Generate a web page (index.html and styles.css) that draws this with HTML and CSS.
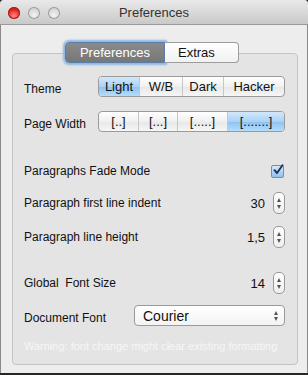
FILE: index.html
```html
<!DOCTYPE html>
<html lang="en">
<head>
    <meta charset="UTF-8">
    <meta name="viewport" content="width=device-width, initial-scale=1.0">
    <title>Preferences</title>
    <link rel="stylesheet" href="styles.css">
</head>
<body>
    <div class="window">
        <div class="titlebar">
            <div class="lights">
                <span class="light close"></span>
                <span class="light"></span>
                <span class="light"></span>
            </div>
            <div class="title">Preferences</div>
        </div>
        <div class="content">
            <div class="tabs">
                <span class="tab active">Preferences</span>
                <span class="tab">Extras</span>
            </div>
            <div class="group">
                <div class="row row-seg">
                    <span class="label">Theme</span>
                    <div class="segmented seg-theme">
                        <span class="seg selected">Light</span>
                        <span class="seg">W/B</span>
                        <span class="seg">Dark</span>
                        <span class="seg">Hacker</span>
                    </div>
                </div>
                <div class="row row-seg">
                    <span class="label">Page Width</span>
                    <div class="segmented seg-width">
                        <span class="seg">[..]</span>
                        <span class="seg">[...]</span>
                        <span class="seg">[.....]</span>
                        <span class="seg selected">[.......]</span>
                    </div>
                </div>

                <div class="row row-check">
                    <span class="label">Paragraphs Fade Mode</span>
                    <span class="checkbox">
                        <svg width="12" height="12" viewBox="0 0 12 12">
                            <path d="M2.5 6.2 L5 9 L10.5 1.2" fill="none" stroke="#1f2f5a" stroke-width="1.9" stroke-linecap="round" stroke-linejoin="round"/>
                        </svg>
                    </span>
                </div>
                <div class="row row-num">
                    <span class="label">Paragraph first line indent</span>
                    <span class="value">30</span>
                    <span class="stepper"><i class="up"></i><i class="down"></i></span>
                </div>
                <div class="row row-num">
                    <span class="label">Paragraph line height</span>
                    <span class="value">1,5</span>
                    <span class="stepper"><i class="up"></i><i class="down"></i></span>
                </div>

                <div class="row row-num row-font">
                    <span class="label">Global&nbsp; Font Size</span>
                    <span class="value">14</span>
                    <span class="stepper"><i class="up"></i><i class="down"></i></span>
                </div>
                <div class="row row-popup">
                    <span class="label">Document Font</span>
                    <div class="popup">
                        <span>Courier</span>
                        <span class="arrows"><i class="up"></i><i class="down"></i></span>
                    </div>
                </div>
                <div class="warning">Warning: font change might clear existing formatting</div>
            </div>
        </div>
    </div>
</body>
</html>
```

FILE: styles.css
```css
body {
    margin: 0;
    background-color: #2a2624;
    font-family: "Liberation Sans", Arial, sans-serif;
    font-size: 12px;
    color: #111;
}
.window {
    width: 308px;
    height: 373px;
    background-color: #ededed;
    border-radius: 4px 4px 0 0;
    box-shadow: inset 1px 0 0 #8a8a8a, inset -1px 0 0 #8a8a8a;
    display: flex;
    flex-direction: column;
    overflow: hidden;
}
.titlebar {
    height: 22px;
    padding-top: 2px;
    background: linear-gradient(#e9e9e9, #c9c9c9);
    border-bottom: 1px solid #9a9a9a;
    border-radius: 4px 4px 0 0;
    display: flex;
    align-items: center;
    position: relative;
    flex-shrink: 0;
}
.lights {
    display: flex;
    gap: 8px;
    padding-left: 8px;
}
.light {
    width: 12px;
    height: 12px;
    border-radius: 50%;
    background: radial-gradient(circle at 50% 70%, #f4f4f4, #c4c4c4);
    box-shadow: inset 0 0 0 1px #9c9c9c;
}
.light.close {
    background: radial-gradient(circle at 50% 75%, #ff8c86, #e0251c 60%, #b2150f);
    box-shadow: inset 0 0 0 1px #a4201a;
}
.title {
    position: absolute;
    left: 0;
    right: 0;
    top: 5px;
    text-align: center;
    font-size: 13px;
    color: #333;
}
.content {
    flex: 1;
    padding: 17px 10px 8px 12px;
    display: flex;
    flex-direction: column;
}
.tabs {
    display: flex;
    justify-content: center;
    margin-right: 6px;
    margin-bottom: -10px;
    position: relative;
    z-index: 1;
}
.tab {
    box-sizing: border-box;
    width: 74px;
    height: 21px;
    line-height: 19px;
    font-size: 13px;
    text-align: center;
    background: linear-gradient(#ffffff, #f1f1f1);
    border: 1px solid #9d9d9d;
}
.tab:last-child {
    border-radius: 0 4px 4px 0;
    border-left: none;
    text-align: left;
    padding-left: 13px;
}
.tab.active {
    width: 100px;
    border-radius: 4px 0 0 4px;
    background: linear-gradient(#8a8a8a, #777);
    color: #fff;
    border-color: #5c7ea6;
    box-shadow: 0 0 2px 2px #8bb7e6;
}
.group {
    flex: 1;
    background-color: #e4e4e4;
    border: 1px solid #c4c4c4;
    border-radius: 4px;
    padding: 22px 12px 0 11px;
    display: flex;
    flex-direction: column;
}
.row {
    display: flex;
    align-items: center;
}
.label {
    flex: 1;
}
.row-seg {
    height: 21px;
    margin-bottom: 14px;
}
.row-seg .label {
    flex: 0 0 74px;
    padding-top: 4px;
}
.segmented {
    flex: 1;
    display: flex;
    height: 19px;
    border: 1px solid #9b9b9b;
    border-radius: 4px;
    background: linear-gradient(#ffffff, #f0f0f0 50%, #e7e7e7 51%, #f6f6f6);
    overflow: hidden;
    font-size: 13px;
}
.seg {
    display: flex;
    align-items: center;
    justify-content: center;
    border-left: 1px solid #c6c6c6;
}
.seg:first-child {
    border-left: none;
}
.seg.selected {
    background: linear-gradient(#d2e8fb, #a9d2f6 50%, #8cc2f2 51%, #b5dcfa);
}
.seg-theme .seg:nth-child(1) { width: 40px; }
.seg-theme .seg:nth-child(2) { width: 42px; }
.seg-theme .seg:nth-child(3) { width: 40px; }
.seg-theme .seg:nth-child(4) { flex: 1; }
.seg-width .seg:nth-child(1) { width: 39px; }
.seg-width .seg:nth-child(2) { width: 38px; }
.seg-width .seg:nth-child(3) { width: 49px; }
.seg-width .seg:nth-child(4) { flex: 1; }
.row-check {
    margin-top: 18px;
    height: 14px;
}
.checkbox {
    width: 11px;
    height: 11px;
    margin-right: 1px;
    border: 1px solid #8a8a8a;
    border-radius: 2px;
    background: linear-gradient(#d7e9fb, #8fc0ee);
    position: relative;
}
.checkbox svg {
    position: absolute;
    left: 0;
    top: -2px;
}
.row-num {
    height: 22px;
    margin-top: 14px;
}
.row-num + .row-num {
    margin-top: 12px;
}
.row-num.row-font {
    margin-top: 24px;
}
.value {
    font-size: 13px;
    margin-right: 8px;
}
.stepper {
    width: 10px;
    height: 20px;
    border: 1px solid #9a9a9a;
    border-radius: 5px;
    background: linear-gradient(#fff, #eee);
    display: flex;
    flex-direction: column;
    align-items: center;
    justify-content: center;
    gap: 3px;
}
.up, .down {
    width: 0;
    height: 0;
    border-left: 2.5px solid transparent;
    border-right: 2.5px solid transparent;
}
.up {
    border-bottom: 4px solid #555;
}
.down {
    border-top: 4px solid #555;
}
.row-popup {
    height: 21px;
    margin-top: 11px;
}
.row-popup .label {
    flex: 0 0 110px;
    padding-top: 4px;
}
.popup {
    flex: 1;
    height: 19px;
    border: 1px solid #9a9a9a;
    border-radius: 4px;
    background: linear-gradient(#fff, #f3f3f3);
    display: flex;
    align-items: center;
    justify-content: space-between;
    padding: 0 6px 0 8px;
    font-size: 14px;
}
.arrows {
    display: flex;
    flex-direction: column;
    gap: 2px;
}
.warning {
    margin-top: 14px;
    font-size: 11px;
    color: #f6f6f6;
    white-space: nowrap;
}
```
